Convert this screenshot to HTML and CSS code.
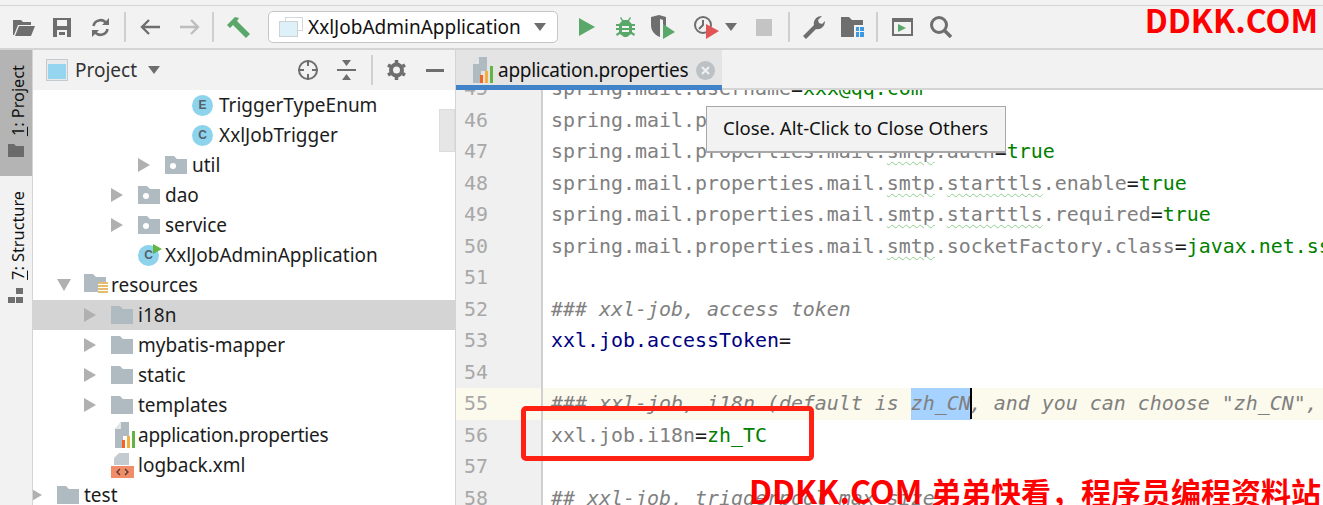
FILE: index.html
```html
<!DOCTYPE html>
<html lang="en">
<head>
<meta charset="utf-8">
<title>application.properties</title>
<link rel="stylesheet" href="styles.css">
</head>
<body>
<svg class="sprite" width="0" height="0" aria-hidden="true">
  <symbol id="pkg" viewBox="0 0 22 18"><path d="M0 0h9l3 3h10v15H0z" fill="#afbac1"/><circle cx="8" cy="10" r="3" fill="#fff"/></symbol>
  <symbol id="dir" viewBox="0 0 22 18"><path d="M0 0h9l3 3h10v15H0z" fill="#afbac1"/></symbol>
  <symbol id="arrow" viewBox="0 0 12 14"><path d="M0 0l12 7-12 7z" fill="#b0b0b0"/></symbol>
  <symbol id="props" viewBox="0 0 21 26"><path d="M7 0h8v14H9v12H1V7z" fill="#afbac1"/><path d="M7 0v7H1z" fill="#e2e6e8"/><rect x="8" y="18" width="3" height="8" fill="#f26522"/><rect x="13" y="14" width="3" height="12" fill="#f4af3d"/><rect x="18" y="9" width="3" height="17" fill="#62b543"/></symbol>
</svg>
<div class="app">
  <div class="topline"></div>
  <header class="toolbar">
    <button class="tb tb-first"><svg width="22" height="18" viewBox="0 0 22 18"><path d="M0 2h8l2 2h8v3H5L1 17H0z" fill="#6e6e6e"/><path d="M6 8h16l-4 10H2z" fill="#6e6e6e"/></svg></button>
    <button class="tb"><svg width="18" height="19" viewBox="0 0 18 19"><path fill-rule="evenodd" d="M0 0h18v19H0zM4 2v6h10V2zM4 12v7h10v-7z" fill="#6e6e6e"/><rect x="6" y="14" width="6" height="3" fill="#6e6e6e"/></svg></button>
    <button class="tb"><svg width="19" height="19" viewBox="0 0 19 19"><path d="M2.5 8A7 7 0 0 1 15 5M16.5 11A7 7 0 0 1 4 14" fill="none" stroke="#6e6e6e" stroke-width="2.6"/><path d="M11 7h7V0zM8 12H1v7z" fill="#6e6e6e"/></svg></button>
    <span class="sep"></span>
    <button class="tb"><svg width="20" height="16" viewBox="0 0 20 16"><path d="M20 8H3M9 1L2 8l7 7" fill="none" stroke="#6e6e6e" stroke-width="2.4"/></svg></button>
    <button class="tb tb-fwd"><svg width="20" height="16" viewBox="0 0 20 16"><path d="M0 8h17M11 1l7 7-7 7" fill="none" stroke="#bdbdbd" stroke-width="2.4"/></svg></button>
    <span class="sep"></span>
    <button class="tb"><svg width="23" height="21" viewBox="0 0 23 21"><path d="M0 8L8 0l4 1-2 3 13 13-4 4L6 8l-3 3z" fill="#59a869"/></svg></button>
    <div class="combo">
      <svg width="24" height="20" viewBox="0 0 24 20"><rect x="6.500" y=".5" width="17" height="13" fill="#fff" stroke="#d5d8da"/><rect x=".5" y="4.500" width="18" height="15" fill="#dff1f8" stroke="#cdd2d5"/></svg>
      <span class="combo-label">XxlJobAdminApplication</span>
      <span class="caret"></span>
    </div>
    <button class="tb tb-run"><svg width="16" height="18" viewBox="0 0 16 18"><path d="M0 0l16 9-16 9z" fill="#59a869"/></svg></button>
    <button class="tb"><svg width="19" height="21" viewBox="0 0 19 21"><path d="M5 0l2 3h5l2-3 1 1-2 3 3 3h3v2h-3v2h3v2h-3v2l3 2-1 2-3-2-4 3h-3l-4-3-3 2-1-2 3-2v-2H0v-2h3V9H0V7h3l3-3-2-3z" fill="#59a869"/><path d="M6 9h7v2H6zM6 13h7v2H6z" fill="#f2f2f2"/></svg></button>
    <button class="tb"><svg width="24" height="24" viewBox="0 0 24 24"><path d="M0 2l8-2 7 2v9l-3 1V5L9 4v18C4 20 0 16 0 10z" fill="#6e6e6e"/><path d="M12 9l12 8-12 7z" fill="#59a869"/></svg></button>
    <button class="tb tb-prof"><svg width="25" height="24" viewBox="0 0 25 24"><circle cx="9" cy="10" r="8" fill="none" stroke="#6e6e6e" stroke-width="2"/><path d="M9 5v5l-4 4" fill="none" stroke="#6e6e6e" stroke-width="2"/><path d="M12 9l13 7-13 8z" fill="#e05555"/></svg></button>
    <span class="caret caret-tb"></span>
    <button class="tb tb-stop"><span class="stop"></span></button>
    <span class="sep"></span>
    <button class="tb"><svg width="22" height="23" viewBox="0 0 22 23"><path d="M3 23l-3-3L11 9c-1-4 2-9 8-9l-4 4 1 3 3 1 3-3c0 6-5 9-9 8z" fill="#6e6e6e"/></svg></button>
    <button class="tb"><svg width="23" height="20" viewBox="0 0 23 20"><path d="M0 0h8l3 3h11v5h-9v12H0z" fill="#6e6e6e"/><path d="M15 10h3v4h-3zM19 10h4v4h-4zM15 15h3v5h-3zM19 15h4v5h-4z" fill="#3d9ae0"/></svg></button>
    <span class="sep"></span>
    <button class="tb"><svg width="21" height="18" viewBox="0 0 21 18"><rect x="1" y="1" width="19" height="16" fill="none" stroke="#6e6e6e" stroke-width="2"/><rect x="1" y="1" width="19" height="3" fill="#6e6e6e"/><path d="M6 6l8 4-8 4z" fill="#59a869"/></svg></button>
    <button class="tb tb-find"><svg width="22" height="22" viewBox="0 0 22 22"><circle cx="9" cy="9" r="7.500" fill="none" stroke="#6e6e6e" stroke-width="3"/><path d="M14 14l7 7" stroke="#6e6e6e" stroke-width="3.500"/></svg></button>
  </header>

  <main class="workspace">
    <aside class="stripe">
      <div class="stripe-tab stripe-on">
        <svg class="stripe-ico" width="16" height="13" viewBox="0 0 16 13"><path d="M0 0h6l2 2h8v11H0z" fill="#6a6a6a"/></svg>
        <span class="vtext"><u>1</u>: Project</span>
      </div>
      <div class="stripe-tab stripe-off">
        <svg class="stripe-ico" width="16" height="16" viewBox="0 0 16 16"><path d="M8 0h7v6H8zM0 9h7v6H0zM8 9h7v6H8z" fill="#6e6e6e"/></svg>
        <span class="vtext"><u>7</u>: Structure</span>
      </div>
    </aside>

    <section class="project">
      <div class="panel-head">
        <svg class="head-ico" width="22" height="22" viewBox="0 0 22 22"><rect x=".5" y=".5" width="21" height="21" fill="#e8eaec" stroke="#c4cacd"/><rect x="2" y="5" width="18" height="15" fill="#95d5f0"/></svg>
        <span class="panel-title">Project</span>
        <span class="caret caret-head"></span>
        <span class="grow"></span>
        <svg class="hbtn" width="22" height="22" viewBox="0 0 22 22"><circle cx="11" cy="11" r="9" fill="none" stroke="#6e6e6e" stroke-width="2"/><path d="M11 1v6M11 15v6M1 11h6M15 11h6" stroke="#6e6e6e" stroke-width="2"/></svg>
        <svg class="hbtn hbtn-col" width="19" height="20" viewBox="0 0 19 20"><path d="M0 9h19v2H0zM5 0h9l-4.500 6zM9.500 14L14 20H5z" fill="#6e6e6e"/></svg>
        <span class="hsep"></span>
        <svg class="hbtn" width="19" height="20" viewBox="0 0 19 20"><circle cx="9.500" cy="10" r="5.500" fill="none" stroke="#6e6e6e" stroke-width="4"/><path d="M9.500 0v20M1 5l17 10M1 15L18 5" stroke="#6e6e6e" stroke-width="3.500" stroke-dasharray="3 14"/></svg>
        <span class="hmin"></span>
      </div>
      <div class="tree">
        <div class="row lv5"><span class="arrow"></span><span class="ico"><span class="badge">E</span></span><span class="label">TriggerTypeEnum</span></div>
        <div class="row lv5"><span class="arrow"></span><span class="ico"><span class="badge">C</span></span><span class="label">XxlJobTrigger</span></div>
        <div class="row lv4"><span class="arrow"><svg width="12" height="14"><use href="#arrow"/></svg></span><span class="ico"><svg width="22" height="18"><use href="#pkg"/></svg></span><span class="label">util</span></div>
        <div class="row lv3"><span class="arrow"><svg width="12" height="14"><use href="#arrow"/></svg></span><span class="ico"><svg width="22" height="18"><use href="#pkg"/></svg></span><span class="label">dao</span></div>
        <div class="row lv3"><span class="arrow"><svg width="12" height="14"><use href="#arrow"/></svg></span><span class="ico"><svg width="22" height="18"><use href="#pkg"/></svg></span><span class="label">service</span></div>
        <div class="row lv3"><span class="arrow"></span><span class="ico"><span class="badge badge-run">C</span><svg class="run-mark" width="9" height="10" viewBox="0 0 9 10"><path d="M0 0l9 5-9 5z" fill="#62b543"/></svg></span><span class="label">XxlJobAdminApplication</span></div>
        <div class="row lv1"><span class="arrow"><svg width="14" height="12" viewBox="0 0 14 12"><path d="M0 0h14L7 12z" fill="#b0b0b0"/></svg></span><span class="ico"><svg width="24" height="22" viewBox="0 0 24 22"><path d="M0 0h9l3 3h10v5H14v10H0z" fill="#afbac1"/><path d="M14 9h10M14 12h10M14 15h10M14 18h10" stroke="#dba63f" stroke-width="1.600"/></svg></span><span class="label">resources</span></div>
        <div class="row row-sel lv2"><span class="arrow"><svg width="12" height="14"><use href="#arrow"/></svg></span><span class="ico"><svg width="22" height="18"><use href="#dir"/></svg></span><span class="label">i18n</span></div>
        <div class="row lv2"><span class="arrow"><svg width="12" height="14"><use href="#arrow"/></svg></span><span class="ico"><svg width="22" height="18"><use href="#dir"/></svg></span><span class="label">mybatis-mapper</span></div>
        <div class="row lv2"><span class="arrow"><svg width="12" height="14"><use href="#arrow"/></svg></span><span class="ico"><svg width="22" height="18"><use href="#dir"/></svg></span><span class="label">static</span></div>
        <div class="row lv2"><span class="arrow"><svg width="12" height="14"><use href="#arrow"/></svg></span><span class="ico"><svg width="22" height="18"><use href="#dir"/></svg></span><span class="label">templates</span></div>
        <div class="row lv2"><span class="arrow"></span><span class="ico ico-file"><svg width="21" height="26"><use href="#props"/></svg></span><span class="label narrow">application.properties</span></div>
        <div class="row lv2"><span class="arrow"></span><span class="ico"><svg width="23" height="25" viewBox="0 0 23 25"><path d="M8 0h10v12H3V5z" fill="#c4cbd0"/><rect y="13" width="23" height="12" fill="#f28c68"/><path d="M9 16l-3 3 3 3M14 16l3 3-3 3" fill="none" stroke="#4a3a32" stroke-width="1.300"/></svg></span><span class="label">logback.xml</span></div>
        <div class="row lv0"><span class="arrow"><svg width="12" height="14"><use href="#arrow"/></svg></span><span class="ico"><svg width="22" height="18"><use href="#dir"/></svg></span><span class="label">test</span></div>
      </div>
      <div class="scrollthumb"></div>
    </section>

    <section class="editor">
      <div class="tabs">
        <div class="tab">
          <svg width="21" height="26"><use href="#props"/></svg>
          <span class="tab-name narrow">application.properties</span>
          <svg class="tab-x" width="19" height="19" viewBox="0 0 19 19"><circle cx="9.500" cy="9.500" r="9.500" fill="#bcc1c5"/><path d="M6 6l7 7M13 6l-7 7" stroke="#f0f0f0" stroke-width="2"/></svg>
        </div>
      </div>
      <div class="code">
        <div class="line"><span class="num">45</span><span class="txt">spring.mail.username<b class="eq">=</b><b class="val">xxx@qq.com</b></span></div>
        <div class="line"><span class="num">46</span><span class="txt">spring.mail.password<b class="eq">=</b><b class="val">xxx</b></span></div>
        <div class="line"><span class="num">47</span><span class="txt">spring.mail.properties.mail.<i class="typo">smtp</i>.auth<b class="eq">=</b><b class="val">true</b></span></div>
        <div class="line"><span class="num">48</span><span class="txt">spring.mail.properties.mail.<i class="typo">smtp</i>.<i class="typo">starttls</i>.enable<b class="eq">=</b><b class="val">true</b></span></div>
        <div class="line"><span class="num">49</span><span class="txt">spring.mail.properties.mail.<i class="typo">smtp</i>.<i class="typo">starttls</i>.required<b class="eq">=</b><b class="val">true</b></span></div>
        <div class="line"><span class="num">50</span><span class="txt">spring.mail.properties.mail.<i class="typo">smtp</i>.socketFactory.class<b class="eq">=</b><b class="val">javax.net.ssl.SSLSocketFactory</b></span></div>
        <div class="line"><span class="num">51</span><span class="txt"></span></div>
        <div class="line"><span class="num">52</span><span class="txt cmt">### xxl-job, access token</span></div>
        <div class="line"><span class="num">53</span><span class="txt key">xxl.job.accessToken<b class="eq">=</b></span></div>
        <div class="line"><span class="num">54</span><span class="txt"></span></div>
        <div class="line line-cur"><span class="num">55</span><span class="txt cmt">### xxl-job, i18n (default is <span class="sel">zh_CN</span><span class="cursor"></span>, and you can choose "zh_CN", "zh_TC" and "en")</span></div>
        <div class="line"><span class="num">56</span><span class="txt">xxl.job.i18n<b class="eq">=</b><b class="val">zh_TC</b></span></div>
        <div class="line"><span class="num">57</span><span class="txt"></span></div>
        <div class="line"><span class="num">58</span><span class="txt cmt">## xxl-job, triggerpool max size</span></div>
      </div>
      <div class="tooltip">Close. Alt-Click to Close Others</div>
    </section>
  </main>

  <div class="redbox"></div>
  <div class="mark mark-top"><span class="mark-latin">DDKK.COM</span></div>
  <div class="mark mark-bottom"><span class="mark-latin">DDKK.COM</span> 弟弟快看，程序员编程资料站</div>
</div>
</body>
</html>
```
FILE: styles.css
```css
* { box-sizing: border-box; }
html, body { margin: 0; height: 100%; }
body { background: #f2f2f2; overflow: hidden; }
.sprite { position: absolute; }

.app {
  position: relative;
  width: 1323px;
  height: 505px;
  overflow: hidden;
  display: flex;
  flex-direction: column;
  font-family: "Noto Sans", "Liberation Sans", sans-serif;
  font-size: 19px;
  color: #1c1c1c;
}
.narrow { letter-spacing: -.27px; }
.topline { height: 6px; flex: none; border-bottom: 1px solid #d4d4d4; }

/* toolbar */
.toolbar {
  height: 44px;
  flex: none;
  display: flex;
  align-items: center;
  padding-left: 5px;
  border-bottom: 2px solid #d4d4d4;
}
.tb {
  width: 38px;
  height: 38px;
  flex: none;
  padding: 0;
  border: 0;
  background: none;
  display: flex;
  align-items: center;
  justify-content: center;
}
.tb-fwd { margin-right: -2px; margin-left: 2px; }
.sep { width: 2px; height: 30px; flex: none; background: #cfcfcf; margin: 0 5px; }
.combo {
  width: 290px;
  height: 32px;
  flex: none;
  margin: 0 10px 0 11px;
  background: #fff;
  border: 1px solid #c6c6c6;
  border-radius: 5px;
  display: flex;
  align-items: center;
  padding-left: 10px;
}
.combo-label { margin-left: 5px; color: #111; }
.caret {
  width: 0;
  height: 0;
  flex: none;
  border-left: 6.500px solid transparent;
  border-right: 6.500px solid transparent;
  border-top: 8px solid #6e6e6e;
}
.combo .caret { margin-left: 13px; }
.caret-tb { margin: 0 8px 0 0; }
.stop { width: 16px; height: 17px; background: #c4c4c4; display: block; }
.tb-prof { margin-left: 5px; }
.tb-find { margin-left: 1px; }

/* main */
.workspace { flex: 1; min-height: 0; display: flex; }

.stripe {
  width: 33px;
  flex: none;
  display: flex;
  flex-direction: column;
  border-right: 1px solid #d4d4d4;
  background: #f2f2f2;
}
.stripe-tab {
  display: flex;
  flex-direction: column-reverse;
  align-items: center;
  justify-content: flex-start;
  flex: none;
  gap: 8px;
  width: 32px;
}
.stripe-on { height: 126px; background: #b4b4b4; padding-bottom: 19px; }
.stripe-off { height: 140px; padding-bottom: 12px; }
.vtext {
  writing-mode: vertical-rl;
  transform: rotate(180deg);
  font-size: 16.300px;
  line-height: 20px;
  white-space: nowrap;
  margin-left: 4px;
  color: #111;
}

.project {
  position: relative;
  width: 423px;
  flex: none;
  background: #fff;
  display: flex;
  flex-direction: column;
  overflow: hidden;
  border-right: 1px solid #d4d4d4;
}
.panel-head {
  height: 40px;
  flex: none;
  background: #f2f2f2;
  display: flex;
  align-items: center;
  padding-left: 13px;
}
.panel-title { margin-left: 7px; color: #333; }
.caret-head { margin-left: 11px; }
.grow { flex: 1; }
.hbtn { flex: none; margin-right: 18px; }
.hbtn-col { margin-right: 15px; }
.hsep { width: 2px; height: 30px; background: #d0d0d0; flex: none; margin-right: 14px; }
.hmin { width: 18px; height: 3px; background: #6e6e6e; flex: none; margin: 0 11px 0 2px; }

.tree { flex: 1; min-height: 0; }
.row { height: 30px; display: flex; align-items: center; white-space: nowrap; }
.row-sel { background: #d4d4d4; }
.arrow { width: 27px; flex: none; display: flex; align-items: center; }
.ico { width: 27px; height: 30px; flex: none; display: flex; align-items: center; position: relative; }
.ico-file { padding-left: 3px; }
.lv0 .arrow { margin-left: -3px; }
.lv1 .arrow { margin-left: 24px; }
.lv2 .arrow { margin-left: 51px; }
.lv3 .arrow { margin-left: 78px; }
.lv4 .arrow { margin-left: 105px; }
.lv5 .arrow { margin-left: 132px; }
.badge {
  width: 21px;
  height: 21px;
  border-radius: 50%;
  background: #8dd3ec;
  color: #55606a;
  font-family: "Liberation Sans", sans-serif;
  font-size: 12px;
  font-weight: 700;
  display: flex;
  align-items: center;
  justify-content: center;
}
.run-mark { position: absolute; left: 15px; top: 4px; }
.scrollthumb { position: absolute; left: 406px; top: 59px; width: 16px; height: 43px; background: #e6e6e6; border: 1px solid #dcdcdc; }

/* editor */
.editor { position: relative; flex: 1; min-width: 0; display: flex; flex-direction: column; background: #fff; }
.tabs { height: 40px; flex: none; background: #f2f2f2; border-bottom: 2px solid #d4d4d4; }
.tab {
  width: 266px;
  height: 40px;
  background: #e4e4e4;
  border-bottom: 5px solid #4083c9;
  display: flex;
  align-items: center;
  padding: 5px 0 0 16px;
}
.tab-name { margin-left: 5px; color: #111; }
.tab-x { margin-left: 8px; flex: none; }
.code {
  flex: 1;
  min-height: 0;
  overflow: hidden;
  font-family: "DejaVu Sans Mono", monospace;
  font-size: 19.930px;
  color: #808080;
}
.line { height: 31.500px; line-height: 31.500px; display: flex; white-space: nowrap; }
.line:first-child { margin-top: -17px; }
.num {
  width: 87px;
  flex: none;
  padding-left: 8px;
  background: #f0f0f0;
  color: #a8a8a8;
  border-right: 2px solid #d0d0d0;
}
.txt { padding-left: 8px; flex: 1; min-width: 0; }
.line-cur .num { background: #fcfaed; }
.line-cur .txt { background: #fcfaed; }
.eq { font-weight: 400; color: #1c1c1c; }
.val { font-weight: 400; color: #008000; }
.key { color: #000080; }
.cmt { font-style: italic; }
.typo { font-style: normal; text-decoration: underline wavy #8fce8f 1px; text-underline-offset: 3px; }
.sel { background: #a6d2ff; display: inline-block; }
.cursor { display: inline-block; width: 2px; height: 31px; background: #000; vertical-align: top; margin-right: -2px; margin-left: -1px; }
.tooltip {
  position: absolute;
  left: 250px;
  top: 56px;
  width: 300px;
  height: 47px;
  background: #f2f2f2;
  border: 1px solid #a8a8a8;
  border-bottom-width: 2px;
  padding: 0 0 3px 16px;
  display: flex;
  align-items: center;
  font-size: 18.550px;
  color: #111;
}

/* overlays */
.redbox {
  position: absolute;
  left: 521px;
  top: 406px;
  width: 293px;
  height: 55px;
  border: 5px solid #ff2214;
  border-radius: 5px;
}
.mark {
  position: absolute;
  font-family: "Noto Sans CJK SC", sans-serif;
  font-weight: 700;
  font-size: 30px;
  color: #ff0000;
  white-space: nowrap;
  line-height: 1;
}
.mark-latin { font-size: 32.300px; margin-right: 2px; }
.mark-top { right: 3px; top: 3px; }
.mark-bottom { left: 749px; top: 474px; }
```
